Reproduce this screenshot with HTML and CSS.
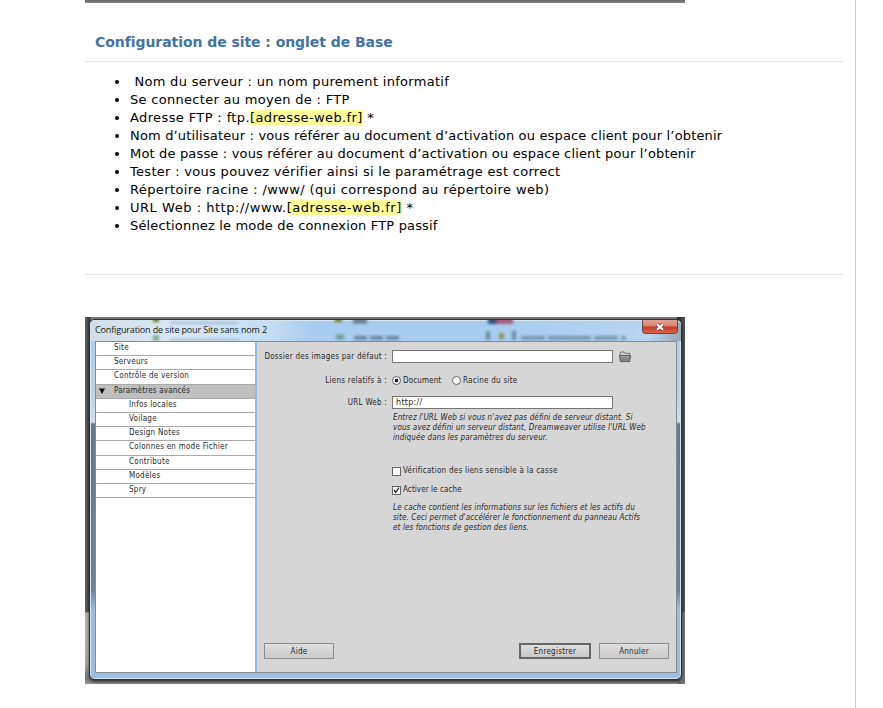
FILE: index.html
```html
<!DOCTYPE html>
<html lang="fr">
<head>
<meta charset="utf-8">
<title>Configuration de site</title>
<link rel="stylesheet" href="styles.css">
</head>
<body>
<main class="page">
  <div class="shot-end"></div>
  <h2 class="heading"><span>Configuration de site : onglet de Base</span></h2>
  <ul class="steps">
    <li class="wide"><span>&nbsp;Nom du serveur : un nom purement informatif</span></li>
    <li class="wide"><span>Se connecter au moyen de : FTP</span></li>
    <li class="wider"><span>Adresse FTP : ftp.<mark>[adresse-web.fr]</mark> *</span></li>
    <li><span>Nom d’utilisateur : vous référer au document d’activation ou espace client pour l’obtenir</span></li>
    <li><span>Mot de passe : vous référer au document d’activation ou espace client pour l’obtenir</span></li>
    <li class="wide"><span>Tester : vous pouvez vérifier ainsi si le paramétrage est correct</span></li>
    <li class="wider"><span>Répertoire racine : /www/ (qui correspond au répertoire web)</span></li>
    <li class="widest"><span>URL Web : http://www.<mark>[adresse-web.fr]</mark> *</span></li>
    <li><span>Sélectionnez le mode de connexion FTP passif</span></li>
  </ul>
  <section class="shot">
    <div class="window">
      <header class="titlebar">
        <svg class="behind" width="590" height="22" viewBox="0 0 590 22" aria-hidden="true">
          <defs><filter id="soft" x="-10%" y="-60%" width="120%" height="220%"><feGaussianBlur stdDeviation="1.5"/></filter></defs>
          <g filter="url(#soft)">
            <path d="M80 3H148M80 20H150" stroke="#8199af" stroke-width="2" opacity=".6"/>
            <path d="M63 0h6M245 0h7" stroke="#627f25" stroke-width="4"/>
            <path d="M246 17h8M63 18h6" stroke="#61906f" stroke-width="5" opacity=".8"/>
            <path d="M263 1h14" stroke="#607891" stroke-width="5"/>
            <path d="M264 18h48" stroke="#6c87a3" stroke-width="4" stroke-dasharray="13 3"/>
            <path d="M398 1h9" stroke="#344f79" stroke-width="6"/>
            <path d="M407 1h16" stroke="#a35b77" stroke-width="6"/>
            <path d="M398 11v9M424 11v9" stroke="#6c879d" stroke-width="4"/>
            <path d="M409 16h5" stroke="#8b9656" stroke-width="6"/>
            <path d="M431 18h105" stroke="#7895b2" stroke-width="4" stroke-dasharray="24 3 43 3"/>
          </g>
        </svg>
        <span class="title">Configuration de site pour Site sans nom 2</span>
        <span class="close"><svg width="10" height="8" viewBox="0 0 10 8"><path d="M2 1.2L8 6.8M8 1.2L2 6.8" stroke="#7c3634" stroke-width="3.4"/><path d="M2 1.2L8 6.8M8 1.2L2 6.8" stroke="#fff" stroke-width="2"/></svg></span>
      </header>
      <div class="client">
        <nav class="side">
          <div>Site</div><div>Serveurs</div><div>Contrôle de version</div>
          <div class="on"><svg width="6" height="6" viewBox="0 0 6 6"><path d="M0 .5H6L3 6Z"/></svg>Paramètres avancés</div>
          <div class="sub">Infos locales</div><div class="sub">Voilage</div><div class="sub">Design Notes</div><div class="sub">Colonnes en mode Fichier</div><div class="sub">Contribute</div><div class="sub">Modèles</div><div class="sub">Spry</div>
        </nav>
        <div class="panel">
          <div class="row r1"><label><span>Dossier des images par défaut :</span></label><span class="field"></span>
            <svg class="folder" width="12" height="12" viewBox="0 0 12 12"><path d="M1 4.5V2.2L2 1h3l1 1.3h4.8v2.2" fill="#d0d0d0" stroke="#666" stroke-width=".9"/><path d="M.5 4.6h11l-.8 6H1.3Z" fill="#858585" stroke="#505050" stroke-width=".9"/><path d="M1.2 5.8h9.6" stroke="#b5b5b5" stroke-width=".8"/></svg></div>
          <div class="row r2"><label><span>Liens relatifs à :</span></label><i class="radio checked"></i><span class="opt">Document</span><i class="radio"></i><span>Racine du site</span></div>
          <div class="row r3"><label><span>URL Web :</span></label><span class="field">http://</span></div>
          <p class="note n1"><span>Entrez l'URL Web si vous n'avez pas défini de serveur distant. Si</span><br><span>vous avez défini un serveur distant, Dreamweaver utilise l'URL Web</span><br><span>indiquée dans les paramètres du serveur.</span></p>
          <div class="check c1"><i class="box"></i><span>Vérification des liens sensible à la casse</span></div>
          <div class="check c2"><i class="box"><svg width="9" height="9" viewBox="0 0 9 9"><path d="M1.3 4L3.6 7 7.7 .8" fill="none" stroke="#222" stroke-width="1.6"/></svg></i><span>Activer le cache</span></div>
          <p class="note n2"><span>Le cache contient les informations sur les fichiers et les actifs du</span><br><span>site. Ceci permet d'accélérer le fonctionnement du panneau Actifs</span><br><span>et les fonctions de gestion des liens.</span></p>
          <footer class="actions"><span class="btn">Aide</span><span class="btn main">Enregistrer</span><span class="btn">Annuler</span></footer>
        </div>
      </div>
    </div>
  </section>
</main>
</body>
</html>
```
FILE: styles.css
```css
* { box-sizing: border-box; }
body { margin: 0; background: #fff; overflow: hidden; }
.page { width: 856px; height: 708px; border-right: 1px solid #ccc; padding: 0 12px 0 85px; font: 13px/18px "DejaVu Sans", sans-serif; color: #000; }
.shot-end { width: 600px; height: 3px; background: linear-gradient(#666, #858585); }
.heading { margin: 0; height: 59px; padding: 29px 10px 0; border-bottom: 1px solid #e5e5e5; font-size: 14px; line-height: 20px; letter-spacing: -.06px; color: #4473a3; white-space: nowrap; }
.steps { margin: 0; padding: 11px 0 0 45px; height: 213px; border-bottom: 1px solid #e5e5e5; white-space: nowrap; letter-spacing: .165px; }
.steps li { height: 18px; }
.steps .wide { letter-spacing: .3px; }
.steps .wider { letter-spacing: .38px; }
.steps .widest { letter-spacing: .53px; }
mark { background: #ff9; color: inherit; }
.shot { width: 600px; height: 367px; margin-top: 42px; padding: 2px 3px 5px 4px; background: linear-gradient(90deg, #666 0, #333 5px, transparent 6px, transparent 592px, #222 592px, #555) 0 0 / 100% 295px no-repeat, linear-gradient(90deg, transparent 0, transparent 592px, #666 593px, #777), linear-gradient(#777 0 295px, #b5b5b5 296px, #aaa 345px, #777 362px, #999); }
.window { width: 593px; height: 361px; border: 1px solid #29333d; border-radius: 6px; padding: 0 4px 6px 5px; background: linear-gradient(#adcef0 0, #bcd0e0 70px, #d5dde5 102px, #66788d 104px, #718298 270px, #9bbde0 290px, #9bbde0); box-shadow: inset 0 0 0 1px #d3e4f3, 0 2px 3px #333; }
.titlebar { position: relative; height: 21px; display: flex; justify-content: space-between; margin: 0 -4px 0 -5px; padding-left: 5px; border-radius: 5px 5px 0 0; background: linear-gradient(90deg, #d3dde5 0, #dae8f5 80px, #c5ddf3 180px, #a9cdf0 220px, #a9cdf0 420px, #b9d5ef 560px, #96a5b2); box-shadow: inset 0 1px #d3e4f3; }
.behind { position: absolute; left: 0; top: 0; overflow: hidden; }
.title { position: relative; font: 9px/20px "Open Sans", sans-serif; letter-spacing: -.15px; color: #101820; white-space: nowrap; }
.close { position: relative; width: 36px; height: 14px; margin-right: 3px; display: flex; align-items: center; justify-content: center; border: 1px solid #70434b; border-top: 0; border-radius: 0 0 4px 4px; background: linear-gradient(#e2a291 0, #d68170 48%, #c23926 52%, #d96545); }
.client { height: 332px; display: flex; border: 1px solid #858b92; background: #d6d6d6; font: 8px/10px "DejaVu Sans Condensed", "DejaVu Sans", sans-serif; letter-spacing: .25px; color: #292929; white-space: nowrap; }
.side { width: 161px; flex: none; background: #fff; border-right: 2px solid #8ebce0; }
.side div { height: 14.2px; padding-left: 18px; line-height: 12px; border-bottom: 1px solid #a9a9a9; }
.side .sub { padding-left: 33px; }
.side .on { display: flex; align-items: center; padding-left: 3px; gap: 9px; background: #bfbfbf; letter-spacing: .17px; }
.panel { flex: 1; display: flex; flex-direction: column; padding: 8px 7px 13px 7px; }
.row { display: flex; align-items: center; height: 13px; }
.row label { width: 123px; margin-right: 5px; display: flex; justify-content: flex-end; }
.r2 { margin-top: 11px; }
.r3 { margin-top: 9px; }
.field { width: 221px; height: 13px; padding-left: 3px; border: 1px solid #777; background: #fff; font-size: 9px; line-height: 10px; }
.folder { margin-left: 6px; }
.radio { width: 9px; height: 9px; margin-right: 2px; border: 1px solid #666; border-radius: 50%; background: #fff; }
.checked { background: radial-gradient(#222 0 1.6px, #fff 2.2px); }
.opt { width: 49px; letter-spacing: .12px; }
.note { margin: 4px 0 0 129px; font-style: italic; line-height: 10px; letter-spacing: .12px; }
.check { display: flex; align-items: center; gap: 2px; height: 10px; margin: 8px 0 0 128px; }
.c1 { margin-top: 23px; }
.c2 { margin-top: 9px; letter-spacing: .07px; }
.box { width: 9px; height: 9px; border: 1px solid #666; background: #fff; display: flex; align-items: center; justify-content: center; }
.n2 { margin-top: 8px; }
.actions { margin-top: auto; display: flex; gap: 8px; }
.btn { width: 70px; height: 16px; border: 1px solid #8d8d8d; background: linear-gradient(#dedede, #cacaca); text-align: center; line-height: 15px; }
.main { margin-left: auto; width: 72px; border: 2px solid #666; line-height: 13px; }
```
